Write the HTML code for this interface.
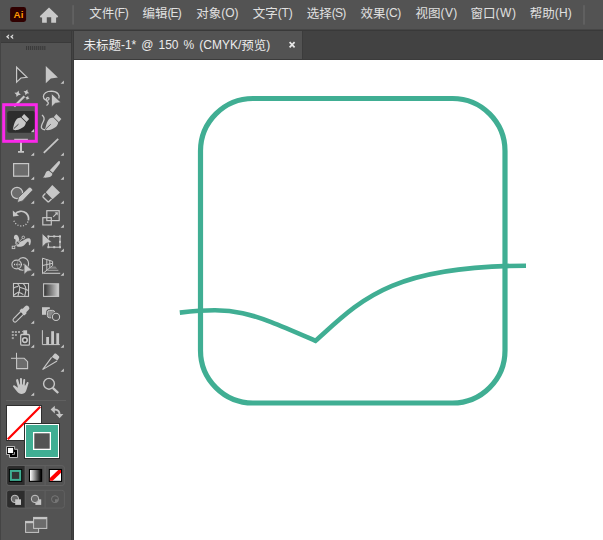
<!DOCTYPE html>
<html lang="zh-CN">
<head>
<meta charset="utf-8">
<title>Ai</title>
<style>
html,body{margin:0;padding:0;}
body{width:603px;height:540px;overflow:hidden;background:#535353;position:relative;font-family:"Liberation Sans","Noto Sans CJK SC",sans-serif;}
.abs{position:absolute;}
#menubar{left:0;top:0;width:603px;height:29px;background:#535353;}
#menuline{left:0;top:29px;width:603px;height:2px;background:linear-gradient(#464646 0,#464646 50%,#393939 50%,#393939 100%);}
.mi{position:absolute;top:0px;height:29px;line-height:28px;font-size:12.5px;color:#e0e0e0;white-space:nowrap;}
.la{font-size:12px;position:relative;top:-1.5px;}
#tabbar{left:74px;top:31px;width:529px;height:28px;background:#424242;}
#tab{left:74px;top:31px;width:228px;height:28px;background:#535353;border-right:1px solid #3c3c3c;}
#tabtxt{left:83.4px;top:33.2px;height:28px;line-height:27px;font-size:12.5px;color:#ececec;white-space:nowrap;}
#tabline{left:74px;top:59px;width:529px;height:1px;background:#3b3b3b;}
#canvas{left:74px;top:60px;width:529px;height:480px;background:#ffffff;}
#tbhead{left:0;top:31px;width:71px;height:12px;background:linear-gradient(#424242 0,#424242 11px,#3a3a3a 11px,#3a3a3a 12px);}
#tbbody{left:0;top:43px;width:71px;height:497px;background:#535353;}
#tbdiv{left:71px;top:31px;width:3px;height:509px;background:linear-gradient(90deg,#3a3a3a 0,#3a3a3a 1px,#434343 1px,#434343 2px,#3a3a3a 2px,#3a3a3a 3px);}
#tbleft{left:0;top:31px;width:1px;height:509px;background:#444;}
svg{position:absolute;left:0;top:0;overflow:visible;}
</style>
</head>
<body>
<div id="menubar" class="abs"></div>
<div id="menuline" class="abs"></div>
<div class="mi" style="left:89.2px">文件<span class="la" style="letter-spacing:-0.4px">(F)</span></div>
<div class="mi" style="left:142.4px">编辑<span class="la" style="letter-spacing:-0.8px">(E)</span></div>
<div class="mi" style="left:196.2px">对象<span class="la" style="letter-spacing:0px">(O)</span></div>
<div class="mi" style="left:252.8px">文字<span class="la" style="letter-spacing:-0.2px">(T)</span></div>
<div class="mi" style="left:306.8px">选择<span class="la" style="letter-spacing:-0.8px">(S)</span></div>
<div class="mi" style="left:360.4px">效果<span class="la" style="letter-spacing:-0.4px">(C)</span></div>
<div class="mi" style="left:415.6px">视图<span class="la" style="letter-spacing:0.3px">(V)</span></div>
<div class="mi" style="left:470.6px">窗口<span class="la" style="letter-spacing:0.5px">(W)</span></div>
<div class="mi" style="left:529.8px">帮助<span class="la" style="letter-spacing:0.1px">(H)</span></div>
<div id="tabbar" class="abs"></div>
<div id="tab" class="abs"></div>
<div id="tabtxt" class="abs">未标题<span class="la" style="word-spacing:1.7px">-1* @ 150 % (CMYK/</span>预览<span class="la">)</span></div>
<div id="tabline" class="abs"></div>
<div id="canvas" class="abs"></div>
<div id="tbhead" class="abs"></div>
<div id="tbbody" class="abs"></div>
<div id="tbdiv" class="abs"></div>
<div id="tbleft" class="abs"></div>

<!-- artwork -->
<svg id="art" width="603" height="540" viewBox="0 0 603 540">
  <rect x="200.5" y="98.5" width="304.5" height="304.5" rx="52.5" ry="52.5" fill="none" stroke="#40ae93" stroke-width="5.2"/>
  <path d="M179.8,312.6 C237.8,306.3 248.7,312 315.5,340.8 C360,301 389.7,265.9 526,265.7" fill="none" stroke="#40ae93" stroke-width="4.6" stroke-linejoin="miter"/>
</svg>

<!-- chrome icons -->
<svg id="chrome" width="603" height="540" viewBox="0 0 603 540">
<!--ICONS-START-->
  <!-- Ai logo -->
  <rect x="10.1" y="7.1" width="16" height="14.8" rx="2.4" fill="#300000"/>
  <text x="18.5" y="18.1" font-family="Liberation Sans, sans-serif" font-size="9.8" font-weight="bold" fill="#ff9a00" text-anchor="middle" letter-spacing="0.2">Ai</text>
  <!-- home -->
  <path d="M49,7.5 L58.2,16.2 L57.4,17.5 L56.1,17.5 L56.1,22.7 L51.2,22.7 L51.2,17.3 L46.8,17.3 L46.8,22.7 L42.1,22.7 L42.1,17.5 L40.6,17.5 L39.8,16.2 Z" fill="#c9c9c9"/>
  <rect x="72.2" y="5.2" width="1.8" height="19.4" fill="#616161"/>
  <rect x="583" y="5.2" width="2" height="19.4" fill="#606060"/>
  <!-- tab close -->
  <path d="M289.6,42.1 L294.6,47.3 M294.6,42.1 L289.6,47.3" stroke="#e8e8e8" stroke-width="1.7" fill="none"/>
  <!-- collapse chevrons -->
  <path d="M9.1,34.2 L6,36.7 L9.1,39.2 L9.1,37.7 L8.1,36.7 L9.1,35.7 Z M13.2,34.2 L10.1,36.7 L13.2,39.2 L13.2,37.7 L12.2,36.7 L13.2,35.7 Z" fill="#dcdcdc"/>
  <!-- gripper -->
  <g fill="#3a3a3a">
    <rect x="26.00" y="46" width="1.1" height="4"/><rect x="28.03" y="46" width="1.1" height="4"/><rect x="30.06" y="46" width="1.1" height="4"/><rect x="32.09" y="46" width="1.1" height="4"/><rect x="34.12" y="46" width="1.1" height="4"/><rect x="36.15" y="46" width="1.1" height="4"/><rect x="38.18" y="46" width="1.1" height="4"/><rect x="40.21" y="46" width="1.1" height="4"/><rect x="42.24" y="46" width="1.1" height="4"/><rect x="44.27" y="46" width="1.1" height="4"/>
  </g>
  <!-- selected tool highlight -->
  <rect x="7.2" y="111" width="27.8" height="21.8" rx="2.2" fill="#2d2d2d"/>
  <g id="tools" fill="#c7c7c7" stroke="none">
    <!-- row1: selection (outline arrow) -->
    <path d="M16.6,67.2 L16.6,82.1 L20.9,78 L27,77.3 Z" fill="#454545" stroke="#c7c7c7" stroke-width="1.2" stroke-linejoin="miter"/>
    <!-- direct selection (filled) -->
    <path d="M45.8,66 L45.8,83.3 L50.8,78.6 L57.9,77.4 Z"/>
    <path d="M63.9,80.4 L63.9,83.7 L60.6,83.7 Z"/>
    <!-- row2: magic wand -->
    <path d="M14.2,106.6 L24.4,96.2" stroke="#c7c7c7" stroke-width="2.2" fill="none"/>
    <path transform="rotate(18 17.6 93.8)" d="M17.6,90.4 L18.7,92.7 L21,93.8 L18.7,94.9 L17.6,97.2 L16.5,94.9 L14.2,93.8 L16.5,92.7 Z"/>
    <path transform="rotate(18 26.4 92.3)" d="M26.4,89.3 L27.4,91.3 L29.4,92.3 L27.4,93.3 L26.4,95.3 L25.4,93.3 L23.4,92.3 L25.4,91.3 Z"/>
    <path transform="rotate(18 27.4 98)" d="M27.4,95.8 L28.2,97.2 L29.6,98 L28.2,98.8 L27.4,100.2 L26.6,98.8 L25.2,98 L26.6,97.2 Z"/>
    <!-- lasso + arrow -->
    <path d="M58.8,98.4 C60,95.4 58,91.4 51.4,91.2 C46.4,91.2 43.4,93.6 43.4,96.4 C43.4,99.6 46.4,100.6 47.8,100.2 C49.6,99.8 49.4,97.4 47.6,97.6 C45.8,97.8 45.8,100.6 47.4,101.6 C49,102.6 48.4,104.6 46.4,105.4" fill="none" stroke="#c7c7c7" stroke-width="1.3"/>
    <path d="M51.5,93.6 L51.5,107 L55.3,103.3 L61,102.4 Z" stroke="#535353" stroke-width="0.7"/>
    <!-- row3: pen (selected) -->
    <g id="pen">
      <path d="M12.8,129.3 L13.3,127.2 C14,124 15,121 16.4,119.4 C17.6,118.2 19.4,117.8 20.9,117.6 L25.9,122.6 C25.6,124.2 25.2,125.8 23.5,126.9 C21.4,128.2 18.6,129.7 16.6,130.1 C15.4,130.3 14,130 12.8,129.3 Z"/>
      <path d="M21.5,116.9 L24.1,113.9 L29.1,118.9 L26.5,121.9 Z"/>
    </g>
    <path d="M13.6,128.8 L18.5,124.2" stroke="#2d2d2d" stroke-width="0.9" fill="none"/>
    <path d="M34.2,128.8 L34.2,132.2 L30.8,132.2 Z"/>
    <!-- curvature pen -->
    <g transform="translate(32.3,0)">
      <path d="M12.8,129.3 L13.3,127.2 C14,124 15,121 16.4,119.4 C17.6,118.2 19.4,117.8 20.9,117.6 L25.9,122.6 C25.6,124.2 25.2,125.8 23.5,126.9 C21.4,128.2 18.6,129.7 16.6,130.1 C15.4,130.3 14,130 12.8,129.3 Z"/>
      <path d="M21.5,116.9 L24.1,113.9 L29.1,118.9 L26.5,121.9 Z"/>
      <path d="M13.6,128.8 L18.5,124.2" stroke="#535353" stroke-width="0.9" fill="none"/>
    </g>
    <path d="M42,115 C44.6,117 44.6,119 43.4,121.4 C42,124 40.4,126.6 41.8,128.4 C42.6,129.4 44,129.6 45,129.8" fill="none" stroke="#c7c7c7" stroke-width="1.3"/>
    <!-- row4: type -->
    <path d="M14.2,138.8 H27.9 V140.6 H22 V150.9 H24 V152.8 H18 V150.9 H20 V140.6 H14.2 Z"/>
    <path d="M34.2,152.4 L34.2,155.8 L30.8,155.8 Z"/>
    <!-- line -->
    <path d="M43.8,152.8 L58.2,138.8" stroke="#c7c7c7" stroke-width="1.8" fill="none"/>
    <path d="M63.9,152.4 L63.9,155.8 L60.6,155.8 Z"/>
    <!-- row5: rectangle -->
    <rect x="13.6" y="163.6" width="15" height="12.6" fill="#6c6c6c" stroke="#c7c7c7" stroke-width="1.2"/>
    <path d="M34.2,176.4 L34.2,179.8 L30.8,179.8 Z"/>
    <!-- paintbrush -->
    <path d="M59.6,161.2 C60.4,161.8 60,163.4 59.2,164.6 L52.8,172.8 L49.8,170.2 L57.2,162.6 C58,161.6 59,160.8 59.6,161.2 Z"/>
    <path d="M49.2,170.9 L52.2,173.6 C52.8,176.4 49.4,178.2 42.8,177.6 C44.8,176.4 44.8,174.4 45.6,173 C46.4,171.4 47.8,170.5 49.2,170.9 Z"/>
    <path d="M63.9,176.4 L63.9,179.8 L60.6,179.8 Z"/>
    <!-- row6: shaper -->
    <circle cx="17" cy="193" r="5.6" fill="#6c6c6c" stroke="#c7c7c7" stroke-width="1.2"/>
    <path d="M28.9,187.4 C30.1,186.4 33.2,189 32.4,190.4 L22.6,200.9 L17.2,202.6 L18.6,197.3 Z" stroke="#535353" stroke-width="0.8"/>
    <path d="M34.2,200.4 L34.2,203.8 L30.8,203.8 Z"/>
    <!-- eraser -->
    <path d="M52.3,185 L60,192.4 L52.6,199.2 L45.8,192.2 Z"/>
    <path d="M45.4,193.4 L43.2,195.8 C42.8,196.4 42.8,196.8 43.2,197.2 L47.6,201.4 C48,201.8 48.6,201.8 49,201.4 L51.6,199" fill="none" stroke="#c7c7c7" stroke-width="1.4"/>
    <path d="M63.9,200.4 L63.9,203.8 L60.6,203.8 Z"/>
    <!-- row7: rotate -->
    <path d="M15,214.4 C17.4,210.8 22.6,210.2 26,213 C28.2,215 29,217.6 28.4,220.4" fill="none" stroke="#c7c7c7" stroke-width="1.7"/>
    <path d="M12.8,210.6 L13,216.6 L19,215.8 Z"/>
    <path d="M28,221.6 C26.6,225 23,226.6 19.6,225.8 C16.4,225 14,222.4 13.6,219.4" fill="none" stroke="#c7c7c7" stroke-width="1.3" stroke-dasharray="1.1,1.7"/>
    <path d="M34.2,224.4 L34.2,227.8 L30.8,227.8 Z"/>
    <!-- scale -->
    <rect x="46.8" y="210.7" width="12.4" height="9.9" fill="none" stroke="#c7c7c7" stroke-width="1.2"/>
    <rect x="42.8" y="217.7" width="8.5" height="7.2" fill="none" stroke="#c7c7c7" stroke-width="1.2"/>
    <path d="M53.2,216.8 L57.2,212.8" stroke="#c7c7c7" stroke-width="1.1" fill="none"/>
    <path d="M54.6,212.4 L57.8,212.2 L57.6,215.4 Z"/>
    <path d="M63.9,224.4 L63.9,227.8 L60.6,227.8 Z"/>
    <!-- row8: width tool -->
    <path d="M14,238.8 C13.6,236 14.6,234.8 16,234.8 C17.6,234.8 18.6,236.6 19,238.6 C19.2,239.8 19.4,240.8 20,241.4 C22,241.2 23.6,240.2 25.2,239.2 C26.8,238.2 28.6,237.8 29.8,238.6 C31.2,239.6 31.2,242.6 30,245.2 L28.8,245 C29,243.4 28.8,241.8 28,241.4 C27,241.6 26,243.4 24.2,245.2 C22.8,246.4 21,246.8 19.4,246.8 C17.4,246.8 16,246.2 15.6,245 C15,243.4 15.6,241.6 15.6,240.2 C15.6,239.4 15,239 14,238.8 Z"/>
    <path d="M14.6,246.2 L22.6,238.2" stroke="#535353" stroke-width="1.8" fill="none"/>
    <path d="M14.6,246.2 L22.6,238.2" stroke="#c7c7c7" stroke-width="0.8" fill="none"/>
    <circle cx="17.8" cy="243" r="1.7" fill="#444" stroke="#c7c7c7" stroke-width="0.7"/><path d="M16.9,243.9 L18.7,242.1" stroke="#c7c7c7" stroke-width="0.7" fill="none"/>
    <circle cx="23.3" cy="237.4" r="1.3" fill="#535353" stroke="#c7c7c7" stroke-width="0.9"/>
    <rect x="12.2" y="246.2" width="2.6" height="2.4" fill="#535353" stroke="#c7c7c7" stroke-width="0.9"/>
    <path d="M34.2,248.4 L34.2,251.8 L30.8,251.8 Z"/>
    <!-- free transform -->
    <rect x="48.4" y="236.4" width="11.6" height="10.8" fill="none" stroke="#c7c7c7" stroke-width="1.1"/>
    <g>
      <rect x="47.4" y="235.4" width="2" height="2"/><rect x="53.2" y="235.4" width="2" height="2"/><rect x="59" y="235.4" width="2" height="2"/>
      <rect x="59" y="240.8" width="2" height="2"/>
      <rect x="47.4" y="246.2" width="2" height="2"/><rect x="53.2" y="246.2" width="2" height="2"/><rect x="59" y="246.2" width="2" height="2"/>
    </g>
    <path d="M42.1,233.4 L42.1,247.2 L46,243.4 L52,242.2 Z" stroke="#535353" stroke-width="0.8"/>
    <path d="M63.9,248.4 L63.9,251.8 L60.6,251.8 Z"/>
    <!-- row9: shape builder -->
    <ellipse cx="16.6" cy="264.5" rx="4.7" ry="4.4" fill="none" stroke="#c7c7c7" stroke-width="1.1"/>
    <path d="M18.4,260.2 C19.6,258.4 21.4,257.6 23,257.6 C26.2,257.6 28.6,260.4 28.6,263.8 C28.6,267.4 26,270.2 22.6,270.2 C20.4,270.2 18.8,269.4 17.8,268.2" fill="none" stroke="#c7c7c7" stroke-width="1.1"/><path d="M18.4,260.2 C17,262.6 17,266.2 17.8,268.2" fill="none" stroke="#8c8c8c" stroke-width="0.8"/>
    <path d="M14,264.5 H24" stroke="#d4d4d4" stroke-width="1.3" stroke-dasharray="1.1,1.2" fill="none"/>
    <path d="M24,262.8 L24,274.6 L27.4,271.4 L32.4,270.6 Z" stroke="#535353" stroke-width="0.8"/>
    <path d="M34.2,272.4 L34.2,275.8 L30.8,275.8 Z"/>
    <!-- perspective grid -->
    <g fill="none" stroke="#c7c7c7" stroke-width="1">
      <path d="M42.5,258.2 V273.7 L52.6,265.6 V261.4 Z"/>
      <path d="M46.8,259.6 V270.2 M49.8,260.6 V267.8"/>
      <path d="M42.5,265.5 L52.6,263.3"/>
    </g>
    <path d="M52,266.6 H55.4 L57.2,268.8 H49.4 Z" fill="#858585"/>
    <path d="M47.4,270.3 H58.4" stroke="#ababab" stroke-width="1" fill="none"/>
    <path d="M43.4,273.3 H60.2" stroke="#c7c7c7" stroke-width="1.1" fill="none"/>
    <path d="M63.9,272.4 L63.9,275.8 L60.6,275.8 Z"/>
    <!-- row10: mesh -->
    <g fill="none" stroke="#c7c7c7" stroke-width="1.1">
      <rect x="13.5" y="283.5" width="15" height="12.9" fill="#474747"/>
      <path d="M17.7,283.6 C19.4,285.4 20,287.4 19.6,289.6 C19.2,291.8 18.2,294 18,296.3"/>
      <path d="M13.6,288.2 C15,287 16.6,286.6 18.4,286.4"/>
      <path d="M19.6,287.2 C22.6,288 25.6,289.2 28.4,290.4"/>
      <path d="M23.2,283.6 C25.4,285.6 26.2,288 25.8,290.6 C25.6,292.6 25,294.4 24.7,296.3"/>
      <path d="M13.6,295.4 C15,294 16.6,292.8 18.4,292.2 C20.2,292.6 22,293.4 23.4,294.6"/>
    </g>
    <!-- gradient -->
    <defs>
      <linearGradient id="gr1" x1="0" x2="1" y1="0" y2="0"><stop offset="0" stop-color="#2f2f2f"/><stop offset="1" stop-color="#d0d0d0"/></linearGradient>
      <linearGradient id="gr2" x1="0" x2="1" y1="0" y2="0"><stop offset="0" stop-color="#ffffff"/><stop offset="1" stop-color="#000000"/></linearGradient>
    </defs>
    <rect x="43.6" y="283.8" width="15" height="12.6" fill="url(#gr1)" stroke="#c7c7c7" stroke-width="1.1"/>
    <!-- row11: eyedropper -->
    <g transform="translate(13.4,321.6) rotate(-45)">
      <rect x="0.3" y="-2" width="14" height="4" rx="2" fill="none" stroke="#c7c7c7" stroke-width="1.1"/>
      <path d="M6,0 H12" stroke="#3c3c3c" stroke-width="1.6" stroke-dasharray="0.9,0.7" fill="none"/>
      <rect x="12" y="-3.5" width="3.6" height="7" rx="0.8"/>
      <rect x="13" y="-2.5" width="8.4" height="5" rx="2.3"/>
    </g>
    <path d="M34.2,320.4 L34.2,323.8 L30.8,323.8 Z"/>
    <!-- blend -->
    <rect x="42" y="307.2" width="7.8" height="7.6"/>
    <rect x="47.4" y="310.4" width="7.4" height="7.4" rx="2.2" fill="#535353" stroke="#535353" stroke-width="2.6"/>
    <rect x="47.4" y="310.4" width="7.4" height="7.4" rx="2.2" fill="#8a8a8a" stroke="#c7c7c7" stroke-width="1"/>
    <circle cx="56" cy="316.9" r="3.6" fill="#535353" stroke="#535353" stroke-width="2.6"/>
    <circle cx="56" cy="316.9" r="3.6" fill="#535353" stroke="#c7c7c7" stroke-width="1.1"/>
    <!-- row12: symbol sprayer -->
    <g fill="#a4a4a4">
      <rect x="11.8" y="331" width="2" height="2"/><rect x="14.9" y="331" width="2" height="2"/><rect x="18" y="331" width="2" height="2"/>
      <rect x="11.8" y="334" width="2" height="2"/><rect x="14.9" y="334" width="2" height="2"/>
      <rect x="11.8" y="337.1" width="2" height="2"/>
    </g>
    <rect x="20.7" y="334.5" width="8.7" height="10.7" rx="1.2" fill="#454545" stroke="#c7c7c7" stroke-width="1.3"/>
    <rect x="23.3" y="330.3" width="3.8" height="3.8"/>
    <path d="M23.4,330.6 L21.8,331.8 L23.4,332.6 Z"/>
    <circle cx="24.9" cy="340.1" r="2.3" fill="#3c3c3c" stroke="#c7c7c7" stroke-width="1.6"/>
    <path d="M34.2,344.4 L34.2,347.8 L30.8,347.8 Z"/>
    <!-- column graph -->
    <path d="M42.4,330.2 V344.6 H59.8" fill="none" stroke="#c7c7c7" stroke-width="1"/>
    <rect x="46.2" y="337" width="2.8" height="7.6"/><rect x="51.2" y="331.2" width="2.8" height="13.4"/><rect x="56.3" y="333.2" width="2.8" height="11.4"/>
    <path d="M63.9,344.4 L63.9,347.8 L60.6,347.8 Z"/>
    <!-- row13: artboard -->
    <path d="M16.5,352.8 V358.2 M11,358.3 H16.5" stroke="#c7c7c7" stroke-width="1" fill="none"/>
    <path d="M16.6,358.3 H24.2 L27.6,361.7 V368.6 H16.6 Z" fill="#6c6c6c" stroke="#c7c7c7" stroke-width="1.1"/>
        <!-- slice -->
    <path d="M54.4,353.8 C55,353.4 55.6,353.4 56.2,353.8 L59,356.2 C59.4,356.8 59.4,357.4 59,358 L57.4,360.6 L51.8,357 Z"/>
    <path d="M51.6,357.4 L42.6,369.6 L57,361" fill="none" stroke="#c7c7c7" stroke-width="1.1"/>
    <path d="M63.9,368.4 L63.9,371.8 L60.6,371.8 Z"/>
    <!-- row14: hand -->
    <path d="M16.2,380 C16.6,378.8 18,378.8 18.3,380 L19.5,384.6 L20.1,384.5 L19.9,379 C20,377.7 21.9,377.7 22,379 L22.1,384.4 L22.8,384.4 L23.3,379.8 C23.6,378.6 25.3,378.8 25.2,380 L24.7,385.4 L25.3,385.6 L26.8,382.4 C27.4,381.4 28.8,382 28.5,383.2 L26.6,389.6 C26,392.2 24.4,393.9 21.8,393.9 C19.6,393.9 18.2,393 17,391.6 L13.2,386.8 C12.6,385.8 13.6,384.8 14.6,385.4 L18,387.8 L16.2,381.2 C16.1,380.8 16.1,380.4 16.2,380 Z"/>
    <path d="M34.2,392.4 L34.2,395.8 L30.8,395.8 Z"/>
    <!-- zoom -->
    <circle cx="49" cy="383.8" r="5.4" fill="none" stroke="#c7c7c7" stroke-width="1.4"/>
    <path d="M52.8,387.8 L58.2,393" stroke="#c7c7c7" stroke-width="2.4" fill="none"/>
  </g>
  <!-- separator -->
  <rect x="6" y="400" width="60" height="1" fill="#606060"/>
  <!-- fill box -->
  <rect x="6" y="405" width="36" height="36" fill="#2e2e2e"/>
  <rect x="7" y="406" width="34" height="34" fill="#ffffff"/>
  <path d="M7.8,439.2 L40.2,406.8" stroke="#ff0000" stroke-width="2.2" fill="none"/>
  <!-- stroke box -->
  <rect x="24" y="423" width="36" height="36" fill="#2e2e2e"/>
  <rect x="25" y="424" width="34" height="34" fill="#ffffff"/>
  <rect x="26" y="425" width="32" height="32" fill="#40ae93"/>
  <rect x="33" y="432" width="18" height="18" fill="#ffffff"/>
  <rect x="34.3" y="433.3" width="15.4" height="15.4" fill="#535353"/>
  <!-- swap arrows -->
  <path d="M54,409.6 C58,409.4 59.8,411.4 59.6,415" fill="none" stroke="#c2c2c2" stroke-width="2"/>
  <path d="M50.6,409.6 L54.8,405.8 L54.8,413.4 Z" fill="#c2c2c2"/>
  <path d="M55.8,414 L63.4,414 L59.6,418.2 Z" fill="#c2c2c2"/>
  <!-- default colors -->
  <path d="M6.5,446.5 H14.6 V449.3 H17.5 V457.5 H9.5 V454.5 H6.5 Z" fill="#000000" stroke="#c8c8c8" stroke-width="0.9"/>
  <rect x="7.9" y="447.9" width="5.2" height="5.1" fill="#ffffff"/>
  <path d="M12,454.4 H14.5 V452" fill="none" stroke="#c0c0c0" stroke-width="0.8"/>
  <!-- color mode group -->
  <rect x="6.7" y="465.6" width="57.7" height="19.9" rx="2.5" fill="#535353" stroke="#616161" stroke-width="1"/>
  <path d="M9.2,466.1 H25.2 V485 H9.2 C8,485 7.2,484.2 7.2,483 V468.1 C7.2,466.9 8,466.1 9.2,466.1 Z" fill="#2d2d2d"/>
  <path d="M25.2,466 V485 M45.1,466 V485" stroke="#616161" stroke-width="1" fill="none"/>
  <rect x="8.9" y="468.9" width="13.3" height="13" fill="#000000"/>
  <rect x="10.9" y="470.9" width="9.3" height="9" fill="#333333" stroke="#40ae93" stroke-width="2"/>
  <rect x="28.9" y="468.9" width="13.3" height="13" fill="#000000"/>
  <rect x="30" y="470" width="11.1" height="10.8" fill="url(#gr2)"/>
  <rect x="48.8" y="468.9" width="13.3" height="13" fill="#000000"/>
  <rect x="49.9" y="470" width="11.1" height="10.8" fill="#ffffff"/>
  <path d="M49.9,480.8 L49.9,478 L58.2,470 L61,470 L61,472.8 L52.7,480.8 Z" fill="#ff0000"/>
  <!-- draw mode group -->
  <rect x="6.7" y="490.3" width="57.7" height="17.8" rx="2.5" fill="#535353" stroke="#616161" stroke-width="1"/>
  <path d="M9.2,490.8 H25.2 V507.6 H9.2 C8,507.6 7.2,506.8 7.2,505.6 V492.8 C7.2,491.6 8,490.8 9.2,490.8 Z" fill="#2d2d2d"/>
  <path d="M25.2,490.8 V507.6 M45.1,490.8 V507.6" stroke="#616161" stroke-width="1" fill="none"/>
  <circle cx="14.9" cy="498.9" r="3.7" fill="#6a6a6a" stroke="#c7c7c7" stroke-width="1"/>
  <rect x="15.2" y="499.3" width="5.8" height="5.6" fill="#c7c7c7"/>
  <rect x="35.4" y="499.3" width="5.8" height="5.6" fill="#c7c7c7"/>
  <circle cx="35" cy="498.9" r="3.7" fill="#6a6a6a" stroke="#c7c7c7" stroke-width="1"/>
  <circle cx="55" cy="499.2" r="3.5" fill="none" stroke="#767676" stroke-width="1"/>
  <path d="M55,499.2 H58.4 A3.4,3.4 0 0 1 55,502.6 Z" fill="#767676"/>
  <!-- screen mode -->
  <rect x="25.6" y="521.4" width="13" height="11" fill="#6c6c6c" stroke="#c7c7c7" stroke-width="1"/>
  <rect x="25.6" y="521.4" width="13" height="1.8" fill="#c7c7c7"/>
  <rect x="33.6" y="517.4" width="13.2" height="11" fill="#6c6c6c" stroke="#c7c7c7" stroke-width="1"/>
  <rect x="33.6" y="517.4" width="13.2" height="1.8" fill="#c7c7c7"/>
  <!-- magenta highlight -->
  <rect x="3.7" y="104.7" width="32.6" height="36.6" fill="none" stroke="#fa28ea" stroke-width="3"/>
<!--ICONS-END-->
</svg>
</body>
</html>
